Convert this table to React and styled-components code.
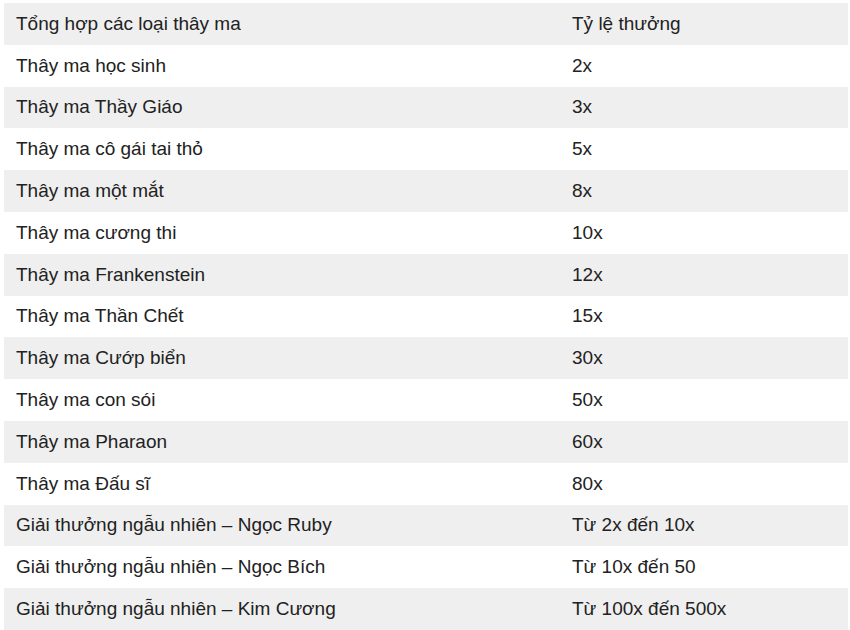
import React from "react";
import styled, { createGlobalStyle } from "styled-components";

const GlobalStyle = createGlobalStyle`
  body {
    margin: 0;
    padding: 3px 2px 0 4px;
    background: #ffffff;
    font-family: "Liberation Sans", Arial, sans-serif;
  }
`;

const Table = styled.table`
  width: 844px;
  border-collapse: collapse;
  table-layout: fixed;
  font-size: 19px;
  color: #222222;
`;

const Row = styled.tr`
  height: 41.8px;
  background: ${(props) => (props.$shaded ? "#efefef" : "#ffffff")};
`;

const Cell = styled.td`
  padding: 0 12px;
  vertical-align: middle;
  width: ${(props) => props.$width || "auto"};
  white-space: nowrap;
`;

const rows = [
  ["Tổng hợp các loại thây ma", "Tỷ lệ thưởng"],
  ["Thây ma học sinh", "2x"],
  ["Thây ma Thầy Giáo", "3x"],
  ["Thây ma cô gái tai thỏ", "5x"],
  ["Thây ma một mắt", "8x"],
  ["Thây ma cương thi", "10x"],
  ["Thây ma Frankenstein", "12x"],
  ["Thây ma Thần Chết", "15x"],
  ["Thây ma Cướp biển", "30x"],
  ["Thây ma con sói", "50x"],
  ["Thây ma Pharaon", "60x"],
  ["Thây ma Đấu sĩ", "80x"],
  ["Giải thưởng ngẫu nhiên – Ngọc Ruby", "Từ 2x đến 10x"],
  ["Giải thưởng ngẫu nhiên – Ngọc Bích", "Từ 10x đến 50"],
  ["Giải thưởng ngẫu nhiên – Kim Cương", "Từ 100x đến 500x"],
];

export default function App() {
  return (
    <>
      <GlobalStyle />
      <Table>
        <tbody>
          {rows.map(([name, rate], i) => (
            <Row key={i} $shaded={i % 2 === 0}>
              <Cell $width="532px">{name}</Cell>
              <Cell>{rate}</Cell>
            </Row>
          ))}
        </tbody>
      </Table>
    </>
  );
}
